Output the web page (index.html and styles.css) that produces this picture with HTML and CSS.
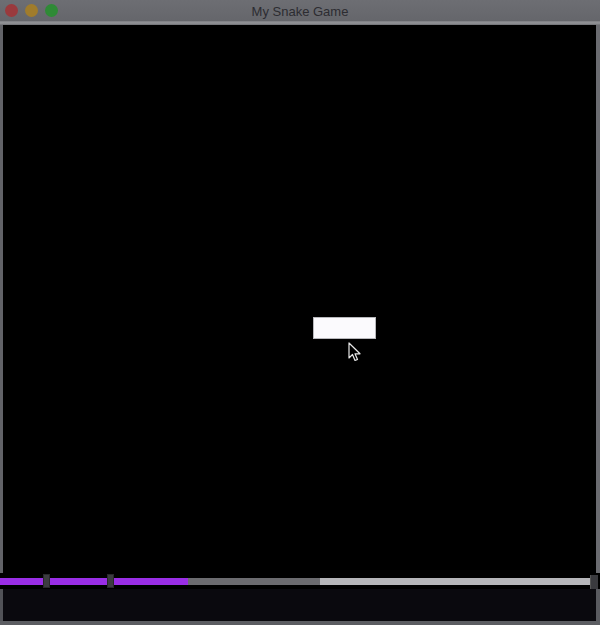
FILE: index.html
```html
<!DOCTYPE html>
<html>
<head>
<meta charset="utf-8">
<title>My Snake Game</title>
<link rel="stylesheet" href="styles.css">
</head>
<body>
<div class="window">
  <div class="titlebar">
    <div class="lights">
      <span class="light red"></span>
      <span class="light yellow"></span>
      <span class="light green"></span>
    </div>
    <div class="title">My Snake Game</div>
  </div>
  <div class="sep"></div>
  <div class="stage">
    <div class="food"></div>
    <svg class="cursor" width="14" height="22" viewBox="0 0 14 22">
      <path d="M1 1 L1 16 L4.5 12.5 L7 18.5 L9.5 17.5 L7 11.8 L12 11.8 Z" fill="#000" stroke="#e8e8e8" stroke-width="1.2" stroke-linejoin="round"/>
    </svg>
  </div>
  <div class="scrubber">
    <div class="track">
      <div class="seg played"></div>
      <div class="seg buffered"></div>
      <div class="seg rest"></div>
      <div class="handle"></div>
      <span class="marker m1"></span>
      <span class="marker m2"></span>
    </div>
  </div>
  <div class="lower"></div>
  <div class="bottom-edge"></div>
</div>
</body>
</html>
```
FILE: styles.css
```css
html, body {
  margin: 0;
  padding: 0;
  background: #000;
}
.window {
  width: 600px;
  height: 625px;
  display: flex;
  flex-direction: column;
  overflow: hidden;
}
.titlebar {
  height: 21px;
  background: linear-gradient(#6d6e73, #65666b);
  position: relative;
  display: flex;
  align-items: center;
  justify-content: center;
}
.lights {
  position: absolute;
  left: 5px;
  top: 4px;
  display: flex;
  gap: 7px;
}
.light {
  width: 13px;
  height: 13px;
  border-radius: 50%;
  display: block;
}
.red { background: #9a3a3d; }
.yellow { background: #a07c2c; }
.green { background: #2f8a36; }
.title {
  font-family: "Liberation Sans", Arial, sans-serif;
  font-size: 13px;
  color: #2c2c31;
  margin-top: 1px;
}
.sep {
  height: 4px;
  background: linear-gradient(#7c7d82, #96979b 50%, #6e6f74);
}
.stage {
  flex: 1;
  background: #000;
  border-left: 3px solid #626368;
  border-right: 4px solid #6a6b70;
  position: relative;
}
.food {
  position: absolute;
  left: 310px;
  top: 292px;
  width: 61px;
  height: 20px;
  background: #fbfafd;
  border: 1px solid #b8b8bc;
}
.cursor {
  position: absolute;
  left: 345px;
  top: 317px;
}
.scrubber {
  height: 16px;
  background: #000;
  display: flex;
  align-items: center;
}
.track {
  position: relative;
  display: flex;
  height: 7px;
  width: 600px;
  align-items: stretch;
}
.seg { height: 7px; }
.played { width: 188px; background: #9a2ee6; }
.buffered { width: 132px; background: #6c6c70; }
.rest { width: 270px; background: #b6b6ba; }
.handle {
  width: 8px;
  height: 14px;
  margin-top: -3px;
  background: #3a3a3e;
  border-left: 1px solid #555;
  box-sizing: border-box;
}
.marker {
  position: absolute;
  top: -4px;
  width: 7px;
  height: 14px;
  background: #3c3c40;
  border: 1px solid #28282b;
  box-sizing: border-box;
}
.m1 { left: 43px; }
.m2 { left: 107px; }
.lower {
  height: 32px;
  background: #0a090e;
  border-left: 3px solid #515257;
  border-right: 4px solid #5a5b60;
}
.bottom-edge {
  height: 4px;
  background: #5c5d62;
}
```
